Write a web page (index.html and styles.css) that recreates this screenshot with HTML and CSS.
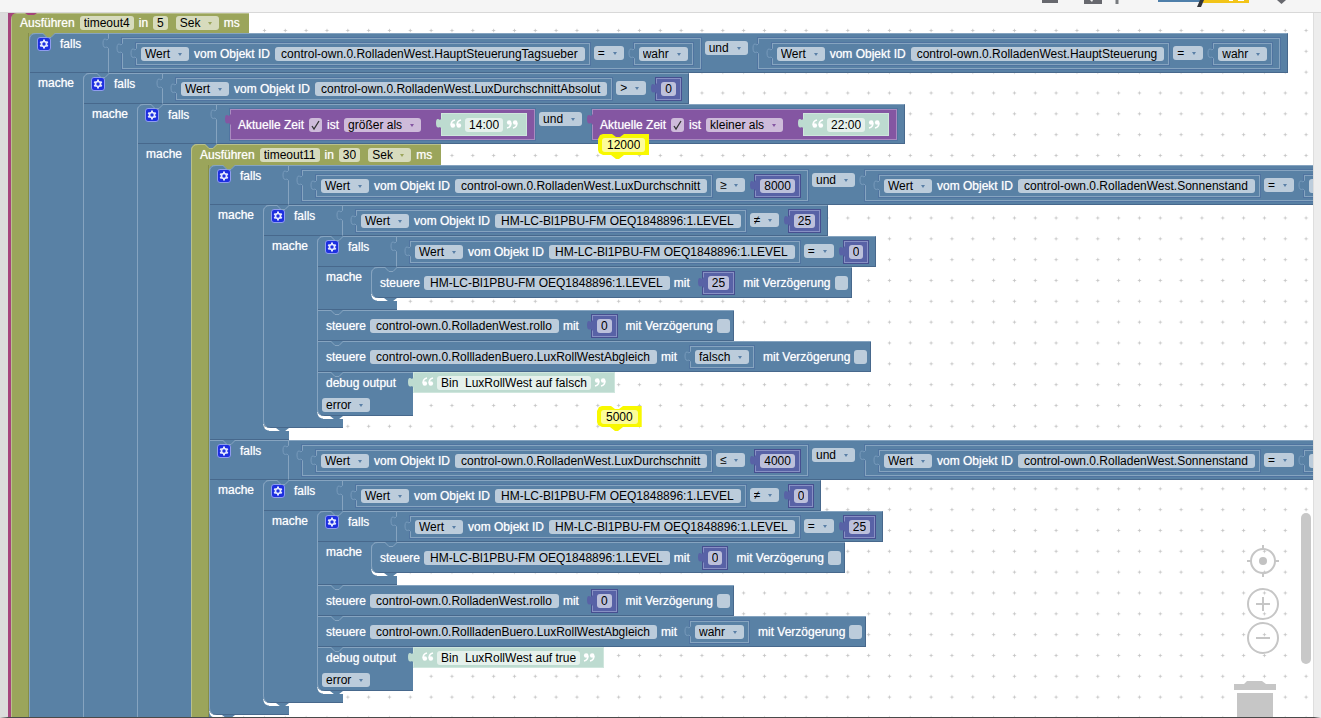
FILE: index.html
```
<!DOCTYPE html>
<html lang="de">
<head>
<meta charset="utf-8">
<title>Blockly Skript</title>
<link rel="stylesheet" href="styles.css">
</head>
<body>
<svg class="defs" aria-hidden="true">
  <symbol id="gear" viewBox="0 0 14 14">
    <rect x=".5" y=".5" width="13" height="13" rx="2.5" fill="#1d2fe0" stroke="#8f9cf0"/>
    <path d="M7 2.6v8.8M3.2 4.8l7.6 4.4M3.2 9.2l7.6-4.4" stroke="#e4e8ff" stroke-width="2"/>
    <circle cx="7" cy="7" r="3.3" fill="#e4e8ff"/><circle cx="7" cy="7" r="1.7" fill="#1d2fe0"/>
  </symbol>
  <symbol id="quote-open" viewBox="0 0 12 10">
    <path d="M5 1Q1 2 1 6M11 1Q7 2 7 6" fill="none" stroke="#fff" stroke-width="1.500"/>
    <circle cx="2.800" cy="6.500" r="2.300" fill="#fff"/><circle cx="8.800" cy="6.500" r="2.300" fill="#fff"/>
  </symbol>
</svg>

<header class="toolbar">
  <svg class="toolbar-icons" width="260" height="8" aria-hidden="true">
    <path d="M2 0h16v3H2zM44 0h18v4H44z" fill="#67686e"/>
    <path d="M50 0h3l-1 2z" fill="#f4f4f4"/>
    <path d="M77 0v4" stroke="#777a7e" stroke-width="3"/>
    <path d="M118 0h42v2h-42z" fill="#4f7faa"/>
    <path d="M163 0h46v3h-46z" fill="#f2c418"/>
    <path d="M189 0h4v1h-4zM198 0h6v1h-6z" fill="#fff"/>
    <path d="M160 0h4l-3 7h-4z" fill="#32343a"/>
    <path d="M237 0h9l-4.500 4z" fill="#67686e"/>
  </svg>
</header>

<main class="editor">
<div class="workspace">
  <svg class="grid" aria-hidden="true">
    <defs>
      <pattern id="dots" width="25" height="25" patternUnits="userSpaceOnUse" patternTransform="translate(4 15) scale(.8333)">
        <path d="M1 3h4M3 1v4" stroke="#c4c4c4" stroke-width="1"/>
      </pattern>
    </defs>
    <rect width="100%" height="100%" fill="url(#dots)"/>
  </svg>

  <section class="root">
  <div class="statement run">
    <div class="head run-head">
      <label for="t4">Ausführen</label><input class="field" id="t4" value="timeout4"><label for="t4s">in</label><input class="field" id="t4s" value="5"><span class="pick unit"><select aria-label="Einheit"><option>Sek</option></select></span><span>ms</span>
    </div>
    <div class="body"><div class="rail"></div><div class="stack in-run">

    <div class="statement if">
      <div class="head">
        <div class="if-label"><svg class="gear"><use href="#gear"/></svg><span>falls</span></div>
        <div class="value group edge">
          <div class="value group">
            <div class="value leaf"><span class="pick"><select aria-label="Attribut"><option>Wert</option></select></span><span>vom Objekt ID</span><button class="field">control-own.0.RolladenWest.HauptSteuerungTagsueber</button></div>
            <span class="pick op"><select aria-label="Vergleich"><option>=</option></select></span>
            <div class="value leaf"><span class="pick"><select aria-label="Wahrheitswert"><option>wahr</option></select></span></div>
          </div>
          <span class="pick op"><select aria-label="Verknüpfung"><option>und</option></select></span>
          <div class="value group">
            <div class="value leaf"><span class="pick"><select aria-label="Attribut"><option>Wert</option></select></span><span>vom Objekt ID</span><button class="field">control-own.0.RolladenWest.HauptSteuerung</button></div>
            <span class="pick op"><select aria-label="Vergleich"><option>=</option></select></span>
            <div class="value leaf"><span class="pick"><select aria-label="Wahrheitswert"><option>wahr</option></select></span></div>
          </div>
        </div>
      </div>
      <div class="body"><div class="rail">mache</div><div class="stack">

      <div class="statement if">
        <div class="head">
          <div class="if-label"><svg class="gear"><use href="#gear"/></svg><span>falls</span></div>
          <div class="value group edge">
            <div class="value leaf"><span class="pick"><select aria-label="Attribut"><option>Wert</option></select></span><span>vom Objekt ID</span><button class="field">control-own.0.RolladenWest.LuxDurchschnittAbsolut</button></div>
            <span class="pick op"><select aria-label="Vergleich"><option>&gt;</option></select></span>
            <div class="value leaf number"><input class="field" aria-label="Zahl" value="0"></div>
          </div>
        </div>
        <div class="body"><div class="rail">mache</div><div class="stack">

        <div class="statement if">
          <div class="head">
            <div class="if-label"><svg class="gear"><use href="#gear"/></svg><span>falls</span></div>
            <div class="value group edge">
              <div class="value time">
                <label for="z1">Aktuelle Zeit</label><input type="checkbox" id="z1" checked><span>ist</span><span class="pick"><select aria-label="Zeitvergleich"><option>größer als</option></select></span>
                <div class="value text"><svg class="quote"><use href="#quote-open"/></svg><input class="field" aria-label="Uhrzeit" value="14:00"><svg class="quote close"><use href="#quote-open"/></svg></div>
              </div>
              <span class="pick op"><select aria-label="Verknüpfung"><option>und</option></select></span>
              <div class="value time">
                <label for="z2">Aktuelle Zeit</label><input type="checkbox" id="z2" checked><span>ist</span><span class="pick"><select aria-label="Zeitvergleich"><option>kleiner als</option></select></span>
                <div class="value text"><svg class="quote"><use href="#quote-open"/></svg><input class="field" aria-label="Uhrzeit" value="22:00"><svg class="quote close"><use href="#quote-open"/></svg></div>
              </div>
            </div>
          </div>
          <div class="body"><div class="rail">mache</div><div class="stack">

          <div class="statement run">
            <div class="head run-head">
              <label for="t11">Ausführen</label><input class="field" id="t11" value="timeout11"><label for="t11s">in</label><input class="field" id="t11s" value="30"><span class="pick unit"><select aria-label="Einheit"><option>Sek</option></select></span><span>ms</span>
            </div>
            <div class="body"><div class="rail"></div><div class="stack in-run">

            <div class="statement if">
              <div class="head">
                <div class="if-label"><svg class="gear"><use href="#gear"/></svg><span>falls</span></div>
                <div class="value group edge">
                  <div class="value group">
                    <div class="value leaf"><span class="pick"><select aria-label="Attribut"><option>Wert</option></select></span><span>vom Objekt ID</span><button class="field">control-own.0.RolladenWest.LuxDurchschnitt</button></div>
                    <span class="pick op"><select aria-label="Vergleich"><option>≥</option></select></span>
                    <div class="value leaf number"><input class="field" aria-label="Zahl" value="8000"></div>
                  </div>
                  <span class="pick op"><select aria-label="Verknüpfung"><option>und</option></select></span>
                  <div class="value group">
                    <div class="value leaf"><span class="pick"><select aria-label="Attribut"><option>Wert</option></select></span><span>vom Objekt ID</span><button class="field">control-own.0.RolladenWest.Sonnenstand</button></div>
                    <span class="pick op"><select aria-label="Vergleich"><option>=</option></select></span>
                    <div class="value leaf"><span class="pick"><select aria-label="Wahrheitswert"><option>wahr</option></select></span></div>
                  </div>
                </div>
              </div>
              <div class="body"><div class="rail">mache</div><div class="stack">

              <div class="statement if">
                <div class="head">
                  <div class="if-label"><svg class="gear"><use href="#gear"/></svg><span>falls</span></div>
                  <div class="value group edge">
                    <div class="value leaf"><span class="pick"><select aria-label="Attribut"><option>Wert</option></select></span><span>vom Objekt ID</span><button class="field">HM-LC-Bl1PBU-FM OEQ1848896:1.LEVEL</button></div>
                    <span class="pick op"><select aria-label="Vergleich"><option>≠</option></select></span>
                    <div class="value leaf number"><input class="field" aria-label="Zahl" value="25"></div>
                  </div>
                </div>
                <div class="body"><div class="rail">mache</div><div class="stack">

                <div class="statement if">
                  <div class="head">
                    <div class="if-label"><svg class="gear"><use href="#gear"/></svg><span>falls</span></div>
                    <div class="value group edge">
                      <div class="value leaf"><span class="pick"><select aria-label="Attribut"><option>Wert</option></select></span><span>vom Objekt ID</span><button class="field">HM-LC-Bl1PBU-FM OEQ1848896:1.LEVEL</button></div>
                      <span class="pick op"><select aria-label="Vergleich"><option>=</option></select></span>
                      <div class="value leaf number"><input class="field" aria-label="Zahl" value="0"></div>
                    </div>
                  </div>
                  <div class="body"><div class="rail">mache</div><div class="stack">
                    <div class="statement"><div class="head control"><span>steuere</span><button class="field">HM-LC-Bl1PBU-FM OEQ1848896:1.LEVEL</button><span>mit</span><div class="value leaf number"><input class="field" aria-label="Zahl" value="25"></div><label for="v1">mit Verzögerung</label><input type="checkbox" id="v1"></div></div>
                  </div></div>
                  <div class="foot"></div>
                </div>
                <div class="statement"><div class="head control"><span>steuere</span><button class="field">control-own.0.RolladenWest.rollo</button><span>mit</span><div class="value leaf number"><input class="field" aria-label="Zahl" value="0"></div><label for="v2">mit Verzögerung</label><input type="checkbox" id="v2"></div></div>
                <div class="statement"><div class="head control"><span>steuere</span><button class="field">control-own.0.RollladenBuero.LuxRollWestAbgleich</button><span>mit</span><div class="value leaf"><span class="pick"><select aria-label="Wahrheitswert"><option>falsch</option></select></span></div><label for="v3">mit Verzögerung</label><input type="checkbox" id="v3"></div></div>
                <div class="statement debug">
                  <div class="debug-box"><label for="d1">debug output</label><span class="pick"><select aria-label="Stufe"><option>error</option></select></span></div>
                  <div class="value text"><svg class="quote"><use href="#quote-open"/></svg><input class="field" id="d1" value="Bin  LuxRollWest auf falsch"><svg class="quote close"><use href="#quote-open"/></svg></div>
                </div>
                </div></div>
                <div class="foot"></div>
              </div>
              </div></div>
              <div class="foot"></div>
            </div>

            <div class="statement if">
              <div class="head">
                <div class="if-label"><svg class="gear"><use href="#gear"/></svg><span>falls</span></div>
                <div class="value group edge">
                  <div class="value group">
                    <div class="value leaf"><span class="pick"><select aria-label="Attribut"><option>Wert</option></select></span><span>vom Objekt ID</span><button class="field">control-own.0.RolladenWest.LuxDurchschnitt</button></div>
                    <span class="pick op"><select aria-label="Vergleich"><option>≤</option></select></span>
                    <div class="value leaf number"><input class="field" aria-label="Zahl" value="4000"></div>
                  </div>
                  <span class="pick op"><select aria-label="Verknüpfung"><option>und</option></select></span>
                  <div class="value group">
                    <div class="value leaf"><span class="pick"><select aria-label="Attribut"><option>Wert</option></select></span><span>vom Objekt ID</span><button class="field">control-own.0.RolladenWest.Sonnenstand</button></div>
                    <span class="pick op"><select aria-label="Vergleich"><option>=</option></select></span>
                    <div class="value leaf"><span class="pick"><select aria-label="Wahrheitswert"><option>wahr</option></select></span></div>
                  </div>
                </div>
              </div>
              <div class="body"><div class="rail">mache</div><div class="stack">

              <div class="statement if">
                <div class="head">
                  <div class="if-label"><svg class="gear"><use href="#gear"/></svg><span>falls</span></div>
                  <div class="value group edge">
                    <div class="value leaf"><span class="pick"><select aria-label="Attribut"><option>Wert</option></select></span><span>vom Objekt ID</span><button class="field">HM-LC-Bl1PBU-FM OEQ1848896:1.LEVEL</button></div>
                    <span class="pick op"><select aria-label="Vergleich"><option>≠</option></select></span>
                    <div class="value leaf number"><input class="field" aria-label="Zahl" value="0"></div>
                  </div>
                </div>
                <div class="body"><div class="rail">mache</div><div class="stack">

                <div class="statement if">
                  <div class="head">
                    <div class="if-label"><svg class="gear"><use href="#gear"/></svg><span>falls</span></div>
                    <div class="value group edge">
                      <div class="value leaf"><span class="pick"><select aria-label="Attribut"><option>Wert</option></select></span><span>vom Objekt ID</span><button class="field">HM-LC-Bl1PBU-FM OEQ1848896:1.LEVEL</button></div>
                      <span class="pick op"><select aria-label="Vergleich"><option>=</option></select></span>
                      <div class="value leaf number"><input class="field" aria-label="Zahl" value="25"></div>
                    </div>
                  </div>
                  <div class="body"><div class="rail">mache</div><div class="stack">
                    <div class="statement"><div class="head control"><span>steuere</span><button class="field">HM-LC-Bl1PBU-FM OEQ1848896:1.LEVEL</button><span>mit</span><div class="value leaf number"><input class="field" aria-label="Zahl" value="0"></div><label for="v4">mit Verzögerung</label><input type="checkbox" id="v4"></div></div>
                  </div></div>
                  <div class="foot"></div>
                </div>
                <div class="statement"><div class="head control"><span>steuere</span><button class="field">control-own.0.RolladenWest.rollo</button><span>mit</span><div class="value leaf number"><input class="field" aria-label="Zahl" value="0"></div><label for="v5">mit Verzögerung</label><input type="checkbox" id="v5"></div></div>
                <div class="statement"><div class="head control"><span>steuere</span><button class="field">control-own.0.RollladenBuero.LuxRollWestAbgleich</button><span>mit</span><div class="value leaf"><span class="pick"><select aria-label="Wahrheitswert"><option>wahr</option></select></span></div><label for="v6">mit Verzögerung</label><input type="checkbox" id="v6"></div></div>
                <div class="statement debug">
                  <div class="debug-box"><label for="d2">debug output</label><span class="pick"><select aria-label="Stufe"><option>error</option></select></span></div>
                  <div class="value text"><svg class="quote"><use href="#quote-open"/></svg><input class="field" id="d2" value="Bin  LuxRollWest auf true"><svg class="quote close"><use href="#quote-open"/></svg></div>
                </div>
                </div></div>
                <div class="foot"></div>
              </div>
              </div></div>
              <div class="foot"></div>
            </div>

            </div></div>
            <div class="foot"></div>
          </div>
          </div></div>
          <div class="foot"></div>
        </div>
        </div></div>
        <div class="foot"></div>
      </div>
      </div></div>
      <div class="foot"></div>
    </div>
    </div></div>
    <div class="foot"></div>
  </div>
  </section>

  <div class="loose loose-a"><input class="field" aria-label="Zahl" value="12000"></div>
  <div class="loose loose-b"><input class="field" aria-label="Zahl" value="5000"></div>

  <div class="controls">
    <button class="control-button center" aria-label="Zentrieren"><svg width="32" height="32"><g fill="none" stroke="#c6c6c6" stroke-width="2"><circle cx="16" cy="16" r="12"/><path d="M16 0v5M16 27v5M0 16h5M27 16h5"/></g><circle cx="16" cy="16" r="4" fill="#c2c2c2"/></svg></button>
    <button class="control-button" aria-label="Vergrößern"><svg width="32" height="32"><g fill="none" stroke="#c6c6c6" stroke-width="2"><circle cx="16" cy="16" r="15"/><path d="M9 16h14M16 9v14"/></g></svg></button>
    <button class="control-button" aria-label="Verkleinern"><svg width="32" height="32"><g fill="none" stroke="#c6c6c6" stroke-width="2"><circle cx="16" cy="16" r="15"/><path d="M9 16h14"/></g></svg></button>
    <svg class="trash" width="42" height="36" aria-label="Papierkorb"><path d="M0 3h10l3-3h15l4 3h10v6H0zM3 12h36v25H3z" fill="#c6c6c6"/></svg>
  </div>
  <div class="scroll-thumb"></div>
</div>
</main>
</body>
</html>
```

FILE: styles.css
```
:root {
  --blue: #5981a5;
  --blue-light: #86a4c0;
  --blue-dark: #47688c;
  --olive: #9ba55b;
  --number: #5862a6;
  --purple: #8456a2;
  --text-green: #bddbd0;
}

* { box-sizing: border-box; }

body {
  margin: 0;
  height: 100vh;
  overflow: hidden;
  display: flex;
  flex-direction: column;
  font: 12px/14px "Liberation Sans", Arial, sans-serif;
  color: #fff;
  background: #fff;
}

.defs { position: absolute; width: 0; height: 0; }

.toolbar {
  flex: none;
  height: 13px;
  padding-right: 21px;
  display: flex;
  justify-content: flex-end;
  background: #f5f5f5;
  border-bottom: 1px solid #d8d8d8;
}

.editor {
  flex: 1;
  min-height: 0;
  display: flex;
  border-left: 8px solid #dcdcdc;
  border-right: 7px solid #ededed;
  border-bottom: 1px solid #4a4a4a;
}

.workspace {
  position: relative;
  flex: 1;
  min-width: 0;
  overflow: hidden;
  border-right: 1px solid #dedede;
}

.grid {
  position: absolute;
  inset: 0;
  width: 100%;
  height: 100%;
}

.root {
  position: relative;
  width: max-content;
  border-left: 3px solid #a5447c;
}

/* Statement blocks */
.statement { position: relative; }

.head {
  width: max-content;
  display: flex;
  background: var(--blue);
  box-shadow: inset 0 1px var(--blue-light), inset 1px 0 var(--blue-light), inset -1px 0 var(--blue-dark), inset 0 -1px var(--blue-dark);
  white-space: nowrap;
}

.head span, .head label, .rail, .debug-box label { text-shadow: 0 0 1px rgba(255, 255, 255, .7); }

.statement::before {
  content: "";
  position: absolute;
  z-index: 1;
  left: 0;
  top: 0;
  width: 30px;
  height: 7px;
  background: url("data:image/svg+xml,%3Csvg xmlns='http://www.w3.org/2000/svg' width='30' height='7'%3E%3Cpath d='M14 0l4 4h4l4-4z' fill='%235981a5'/%3E%3Cpath d='M13 .5h1l4 4h4l4-4h1' fill='none' stroke='%2386a4c0'/%3E%3C/svg%3E") no-repeat;
}

.stack > .statement:first-child::before {
  background-image: url("data:image/svg+xml,%3Csvg xmlns='http://www.w3.org/2000/svg' width='30' height='7'%3E%3Cpath d='M0 7V0h6Q0 0 0 7M14 0l4 4h4l4-4z' fill='%235981a5'/%3E%3Cpath d='M.5 7Q.5 .5 7 .5h7l4 4h4l4-4h1' fill='none' stroke='%2386a4c0'/%3E%3C/svg%3E");
}

.stack.in-run > .statement:first-child::before {
  background-image: url("data:image/svg+xml,%3Csvg xmlns='http://www.w3.org/2000/svg' width='30' height='7'%3E%3Cpath d='M0 7V0h6Q0 0 0 7M14 0l4 4h4l4-4z' fill='%239ba55b'/%3E%3Cpath d='M.5 7Q.5 .5 7 .5h7l4 4h4l4-4h1' fill='none' stroke='%2386a4c0'/%3E%3C/svg%3E");
}

.stack > .statement.run:first-child::before {
  background-image: url("data:image/svg+xml,%3Csvg xmlns='http://www.w3.org/2000/svg' width='30' height='7'%3E%3Cpath d='M0 7V0h6Q0 0 0 7M14 0l4 4h4l4-4z' fill='%235981a5'/%3E%3Cpath d='M.5 7Q.5 .5 7 .5h7l4 4h4l4-4h1' fill='none' stroke='%23b9c08c'/%3E%3C/svg%3E");
}

.root > .statement::before {
  background-image: url("data:image/svg+xml,%3Csvg xmlns='http://www.w3.org/2000/svg' width='30' height='7'%3E%3Cpath d='M0 7V0h6Q0 0 0 7M14 0l3 2h6l3-2z' fill='%23a5447c'/%3E%3C/svg%3E");
}

.body { display: flex; }

.rail {
  flex: none;
  width: 54px;
  padding: 3px 0 0 9px;
  background: var(--blue);
  box-shadow: inset 1px 0 var(--blue-light);
}

.stack {
  position: relative;
  padding-bottom: 3px;
}

/* inner corner and connector below the last block of a stack */
.stack::before, .stack::after {
  content: "";
  position: absolute;
  bottom: 0;
  left: 0;
  width: 6px;
  height: 6px;
  background: radial-gradient(circle at 100% 0, transparent 5px, var(--blue) 6px);
}

.stack::after {
  left: 13px;
  width: 13px;
  height: 3px;
  background: var(--blue);
  clip-path: polygon(0 0, 100% 0, 70% 100%, 30% 100%);
}

.foot {
  width: 80px;
  height: 9px;
  background: var(--blue);
  box-shadow: inset 1px 0 var(--blue-light), inset 0 -1px var(--blue-dark);
}

.stack > .statement:last-child > .foot,
.stack > .statement:last-child > .head.control,
.stack > .statement:last-child > .debug-box { border-bottom-left-radius: 7px; }

.run-head {
  height: 20px;
  padding: 0 9px;
  align-items: center;
  gap: 5px;
  background: var(--olive);
  box-shadow: inset 0 1px #b9c08c, inset 1px 0 #b9c08c;
}

.stack .run-head { height: 21px; }

.run > .body > .rail {
  width: 18px;
  padding: 0;
  background: var(--olive);
  box-shadow: inset 1px 0 #b9c08c, inset -1px 0 #858e4a;
}

.run > .foot { background: var(--olive); box-shadow: none; }

.unit { margin-left: 3px; }

.if-label {
  flex: none;
  width: 79px;
  padding: 4px 0 0 8px;
  display: flex;
  gap: 9px;
}

.gear { flex: none; width: 14px; height: 14px; }

.control {
  height: 31px;
  padding: 0 4px 0 9px;
  align-items: center;
  gap: 4px;
}

.control .value { margin: 0 5px 0 9px; }

.debug { display: flex; align-items: flex-start; }

.debug-box {
  width: 96px;
  height: 44px;
  padding: 4px 0 4px 5px;
  display: flex;
  flex-direction: column;
  align-items: flex-start;
  justify-content: space-between;
  background: var(--blue);
  box-shadow: inset 0 1px var(--blue-light), inset 1px 0 var(--blue-light), inset 0 -1px var(--blue-dark);
}

.debug-box label { padding-left: 4px; }

/* Value blocks */
.value {
  position: relative;
  display: flex;
  border: 1px solid var(--blue-light);
  box-shadow: 0 0 0 1px #5074a0;
}

.value::before {
  content: "";
  position: absolute;
  left: -7px;
  top: 3px;
  width: 7px;
  height: 13px;
  background: url("data:image/svg+xml,%3Csvg xmlns='http://www.w3.org/2000/svg' width='7' height='13'%3E%3Cpath d='M7 1L5 3Q1 0 1 6T5 10L7 12' fill='%235981a5' stroke='%23779abb'/%3E%3C/svg%3E") no-repeat;
}

.group {
  padding: 4px 7px 3px 13px;
  align-items: flex-start;
}

.edge {
  border-color: var(--blue-light) var(--blue-dark) var(--blue-dark) var(--blue-light);
  box-shadow: none;
}

.leaf {
  height: 22px;
  padding: 0 4px;
  align-items: center;
  gap: 5px;
}

.op { margin: 3px 10px 0 4px; }

.number {
  background: var(--number);
  border-color: #8890c4;
  box-shadow: 0 0 0 1px #474f90;
}

.number::before {
  background-image: url("data:image/svg+xml,%3Csvg xmlns='http://www.w3.org/2000/svg' width='7' height='13'%3E%3Cpath d='M7 1L5 3Q1 0 1 6T5 10L7 12z' fill='%235862a6'/%3E%3C/svg%3E");
}

.time {
  height: 31px;
  padding: 0 7px;
  align-items: center;
  gap: 5px;
  background: var(--purple);
  border-color: #a98bc0;
}

.time::before {
  background-image: url("data:image/svg+xml,%3Csvg xmlns='http://www.w3.org/2000/svg' width='7' height='13'%3E%3Cpath d='M7 1L5 3Q1 0 1 6T5 10L7 12z' fill='%238456a2'/%3E%3C/svg%3E");
}

.time .text { margin-left: 15px; height: 23px; }

.text {
  height: 21px;
  padding: 0 8px;
  align-items: center;
  gap: 3px;
  background: var(--text-green);
  border-color: #cfe6dd;
  box-shadow: none;
}

.text::before {
  background-image: url("data:image/svg+xml,%3Csvg xmlns='http://www.w3.org/2000/svg' width='7' height='13'%3E%3Cpath d='M7 1L5 3Q1 0 1 6T5 10L7 12z' fill='%23bddbd0'/%3E%3C/svg%3E");
}

.quote { flex: none; width: 12px; height: 10px; margin-bottom: 2px; }
.close { transform: rotate(180deg); }

/* Fields */
.field, select {
  appearance: none;
  height: 14px;
  margin: 0;
  padding: 0 4px;
  border: 0;
  border-radius: 3px;
  font: inherit;
  color: #000;
  background: rgba(255, 255, 255, .6);
  white-space: pre;
}

input.field { field-sizing: content; }
button.field { padding: 0 7px 0 6px; }

.pick { position: relative; display: flex; }

select { padding-right: 18px; }

.pick::after {
  content: "";
  position: absolute;
  right: 7px;
  top: 6px;
  border: 2px solid transparent;
  border-top: 3px solid #5a7fa6;
  border-bottom: 0;
}

.run-head .pick::after { border-top-color: #9ba55b; }
.time .pick::after { border-top-color: #8456a2; }

input[type="checkbox"] {
  appearance: none;
  position: relative;
  width: 13px;
  height: 14px;
  margin: 0;
  border-radius: 3px;
  background: rgba(255, 255, 255, .6);
}

input[type="checkbox"]:checked {
  background: rgba(255, 255, 255, .6) url("data:image/svg+xml,%3Csvg xmlns='http://www.w3.org/2000/svg' width='13' height='14'%3E%3Cpath d='M3 8l2 3L10 3' fill='none' stroke='%23333' stroke-width='1.3'/%3E%3C/svg%3E") no-repeat;
}

/* Unattached blocks on the canvas */
.loose {
  position: absolute;
  padding: 4px 4px 7px 4px;
  background: #f8f800;
  clip-path: polygon(0 5px, 2px 1px, 5px 0, 14px 0, 18px 3px, 22px 3px, 26px 0, 100% 0, 100% 21px, 26px 21px, 21px 25px, 18px 25px, 13px 21px, 5px 21px, 1px 19px, 0 16px);
}

.loose .field { display: block; padding: 0 5px; }
.loose-a { left: 590px; top: 121px; }
.loose-b { left: 589px; top: 393px; }

/* Canvas controls */
.controls {
  position: absolute;
  right: 34px;
  bottom: 0;
  display: flex;
  flex-direction: column;
  align-items: flex-end;
  gap: 2px;
}

.control-button {
  padding: 0;
  border: 0;
  background: none;
  display: block;
  height: 32px;
}

.center { margin-bottom: 9px; }
.trash { margin: 25px 3px 0 0; }

.scroll-thumb {
  position: absolute;
  right: 2px;
  top: 71%;
  width: 10px;
  height: 151px;
  border-radius: 5px;
  background: #c8c8c8;
}
```
